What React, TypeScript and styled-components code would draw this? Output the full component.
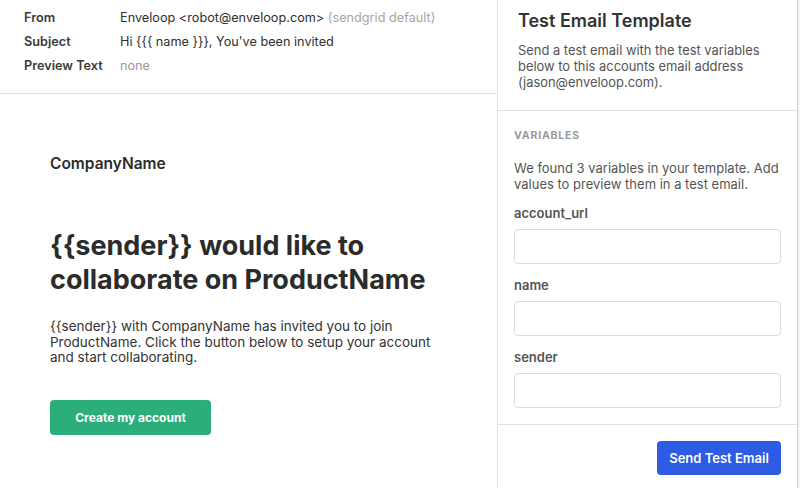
import styled, { createGlobalStyle } from "styled-components";

const GlobalStyle = createGlobalStyle`
  html, body {
    margin: 0;
    padding: 0;
    background: #ffffff;
  }
  body {
    font-family: Inter, "Liberation Sans", sans-serif;
    color: #333333;
  }
  * {
    box-sizing: border-box;
  }
`;

interface MetaRow {
  label: string;
  value: string;
  hint?: string;
  muted?: boolean;
}

const metaRows: MetaRow[] = [
  { label: "From", value: "Enveloop <robot@enveloop.com>", hint: "(sendgrid default)" },
  { label: "Subject", value: "Hi {{{ name }}}, You've been invited" },
  { label: "Preview Text", value: "none", muted: true },
];

const variables = ["account_url", "name", "sender"];

const App = () => {
  return (
    <>
      <GlobalStyle />
      <Screen>
        <Preview>
          <MetaHeader>
            {metaRows.map((row) => (
              <MetaLine key={row.label}>
                <MetaLabel>{row.label}</MetaLabel>
                <MetaValue $muted={row.muted}>
                  {row.value}
                  {row.hint && <Hint> {row.hint}</Hint>}
                </MetaValue>
              </MetaLine>
            ))}
          </MetaHeader>
          <EmailBody>
            <Company>CompanyName</Company>
            <Headline>
              {"{{sender}}"} would like to collaborate on ProductName
            </Headline>
            <BodyText>
              {"{{sender}}"} with CompanyName has invited you to join
              ProductName. Click the button below to setup your account and
              start collaborating.
            </BodyText>
            <CtaButton>Create my account</CtaButton>
          </EmailBody>
        </Preview>

        <Drawer>
          <DrawerHead>
            <DrawerTitle>Test Email Template</DrawerTitle>
            <DrawerDesc>
              Send a test email with the test variables below to this accounts
              email address (jason@enveloop.com).
            </DrawerDesc>
          </DrawerHead>
          <DrawerBody>
            <SectionLabel>Variables</SectionLabel>
            <SectionText>
              We found 3 variables in your template. Add values to preview them
              in a test email.
            </SectionText>
            {variables.map((v) => (
              <Field key={v}>
                <FieldLabel>{v}</FieldLabel>
                <FieldInput />
              </Field>
            ))}
          </DrawerBody>
          <DrawerFoot>
            <SendButton>Send Test Email</SendButton>
          </DrawerFoot>
        </Drawer>

        <BackdropEdge />
      </Screen>
    </>
  );
};

const Screen = styled.div`
  display: flex;
  width: 800px;
  height: 488px;
  overflow: hidden;
`;

const Preview = styled.div`
  width: 498px;
  flex-shrink: 0;
  border-right: 1px solid #e2e2e2;
  display: flex;
  flex-direction: column;
`;

const MetaHeader = styled.div`
  height: 94px;
  padding: 5px 0 0 24px;
  border-bottom: 1px solid #e2e2e2;
`;

const MetaLine = styled.div`
  display: flex;
  height: 24px;
  align-items: center;
  font-size: 12.7px;
`;

const MetaLabel = styled.div`
  width: 96px;
  font-weight: 600;
  color: #3a3a3a;
`;

const MetaValue = styled.div<{ $muted?: boolean }>`
  color: ${(p) => (p.$muted ? "#9a9a9a" : "#2f2f2f")};
`;

const Hint = styled.span`
  color: #a6a6a6;
`;

const EmailBody = styled.div`
  padding: 60px 50px 0 50px;
  color: #2b2b2b;
`;

const Company = styled.div`
  font-size: 15.5px;
  font-weight: 600;
  line-height: 18px;
  margin-top: 1px;
`;

const Headline = styled.h1`
  margin: 56px 0 0;
  font-size: 27px;
  font-weight: 700;
  line-height: 34px;
  max-width: 400px;
`;

const BodyText = styled.p`
  margin: 22px 0 0;
  font-size: 13.5px;
  line-height: 15.7px;
  color: #333333;
  max-width: 400px;
`;

const CtaButton = styled.button`
  margin-top: 34px;
  width: 161px;
  height: 35px;
  border: none;
  border-radius: 4px;
  background: #2bae79;
  color: #ffffff;
  font-family: inherit;
  font-size: 12px;
  font-weight: 700;
`;

const Drawer = styled.div`
  width: 299px;
  flex-shrink: 0;
  display: flex;
  flex-direction: column;
  background: #ffffff;
`;

const DrawerHead = styled.div`
  height: 111px;
  padding: 9px 20px 0 20px;
  border-bottom: 1px solid #e2e2e2;
`;

const DrawerTitle = styled.h2`
  margin: 0;
  font-size: 18px;
  font-weight: 600;
  line-height: 24px;
  color: #333333;
`;

const DrawerDesc = styled.p`
  margin: 10px 0 0;
  font-size: 12.9px;
  line-height: 16px;
  color: #555555;
`;

const DrawerBody = styled.div`
  padding: 18px 16px 0 16px;
  height: 314px;
  border-bottom: 1px solid #e2e2e2;
`;

const SectionLabel = styled.div`
  font-size: 10.5px;
  font-weight: 700;
  letter-spacing: 0.8px;
  text-transform: uppercase;
  color: #9a9a9a;
  line-height: 14px;
`;

const SectionText = styled.p`
  margin: 17px 0 0;
  font-size: 13px;
  line-height: 16px;
  color: #555555;
`;

const Field = styled.div`
  margin-top: 13px;
  display: flex;
  flex-direction: column;
  gap: 8px;
`;

const FieldLabel = styled.label`
  font-size: 13px;
  font-weight: 600;
  line-height: 16px;
  color: #555555;
`;

const FieldInput = styled.input`
  width: 267px;
  height: 35px;
  border: 1px solid #dedede;
  border-radius: 4px;
  background: #ffffff;
  font-family: inherit;
  outline: none;
`;

const DrawerFoot = styled.div`
  display: flex;
  justify-content: flex-end;
  padding: 16px 16px 0 0;
`;

const SendButton = styled.button`
  width: 124px;
  height: 34px;
  border: none;
  border-radius: 4px;
  background: #2d5be3;
  color: #ffffff;
  font-family: inherit;
  font-size: 13px;
  font-weight: 600;
`;

const BackdropEdge = styled.div`
  flex: 1;
  border-left: 1px solid #d4d4d4;
  background: #f4f4f4;
`;

export default App;
